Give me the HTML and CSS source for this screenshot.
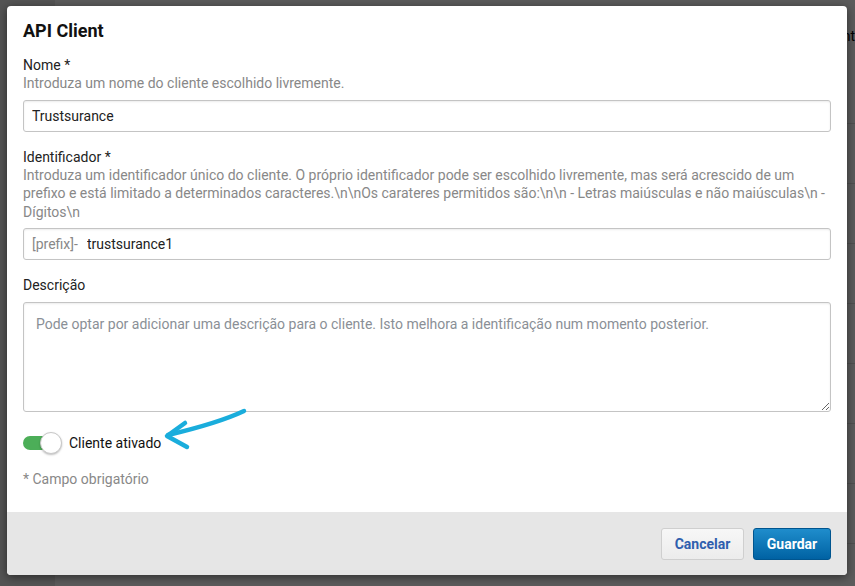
FILE: index.html
```html
<!DOCTYPE html>
<html lang="pt">
<head>
<meta charset="utf-8">
<title>API Client</title>
<link rel="stylesheet" href="styles.css">
</head>
<body>
<div class="page">
  <aside class="sidebar"></aside>
  <main class="main">
    <div class="bg-title"><span class="bg-title-text">Client</span></div>
    <div class="bg-rows">
      <div class="bg-row"></div><div class="bg-row"></div><div class="bg-row"></div><div class="bg-row"></div>
      <div class="bg-row"></div><div class="bg-row"></div><div class="bg-row"></div><div class="bg-row"></div>
    </div>
  </main>
</div>
<div class="backdrop"></div>
<div class="modal">
  <div class="modal-body">
    <h1 class="modal-title">API Client</h1>
    <div class="field">
      <label class="label">Nome *</label>
      <div class="help">Introduza um nome do cliente escolhido livremente.</div>
      <input class="input" type="text" value="Trustsurance">
    </div>
    <div class="field">
      <label class="label">Identificador *</label>
      <div class="help">Introduza um identificador único do cliente. O próprio identificador pode ser escolhido livremente, mas será acrescido de um prefixo e está limitado a determinados caracteres.\n\nOs carateres permitidos são:\n\n - Letras maiúsculas e não maiúsculas\n - Dígitos\n</div>
      <div class="input prefix-input">
        <span class="prefix">[prefix]-</span>
        <input class="bare" type="text" value="trustsurance1">
      </div>
    </div>
    <div class="field">
      <label class="label">Descrição</label>
      <textarea class="textarea" placeholder="Pode optar por adicionar uma descrição para o cliente. Isto melhora a identificação num momento posterior."></textarea>
    </div>
    <div class="toggle-row">
      <span class="toggle"><span class="track"></span><span class="knob"></span></span>
      <span class="toggle-label">Cliente ativado</span>
      <svg class="arrow" width="90" height="45" viewBox="0 0 90 45">
        <path d="M83 5 C 64 14, 45 20, 7 29" fill="none" stroke="#1aaddc" stroke-width="4.5" stroke-linecap="round"/>
        <path d="M24 17 L 6 30 L 26 41" fill="none" stroke="#1aaddc" stroke-width="4.5" stroke-linecap="round" stroke-linejoin="round"/>
      </svg>
    </div>
    <div class="required">* Campo obrigatório</div>
  </div>
  <div class="modal-footer">
    <button class="btn btn-default">Cancelar</button>
    <button class="btn btn-primary">Guardar</button>
  </div>
</div>
</body>
</html>
```
FILE: styles.css
```css
* { box-sizing: border-box; }
html, body { margin: 0; padding: 0; }
body {
  width: 855px;
  height: 586px;
  overflow: hidden;
  font-family: Roboto, "Liberation Sans", Arial, sans-serif;
  font-size: 14px;
  color: #222;
  background: #fff;
}
.page {
  display: grid;
  grid-template-columns: 55px 1fr;
  height: 586px;
}
.sidebar { background: #e8e8e8; }
.main {
  background: #fff;
  padding-top: 28px;
}
.bg-title {
  display: flex;
  justify-content: flex-end;
  height: 95px;
  overflow: hidden;
}
.bg-title-text {
  width: 8px;
  overflow: hidden;
  white-space: nowrap;
  direction: rtl;
  font-size: 14px;
  line-height: 16px;
  color: #000;
}
.bg-rows { display: flex; flex-direction: column; }
.bg-row {
  height: 60px;
  border-top: 1px solid #ddd;
}
.backdrop {
  position: absolute;
  inset: 0;
  background: rgba(0, 0, 0, 0.64);
}
.modal {
  position: absolute;
  left: 7px;
  top: 6px;
  width: 840px;
  height: 569px;
  background: #fff;
  border-radius: 4px;
  box-shadow: 0 2px 10px rgba(0, 0, 0, 0.5);
  display: flex;
  flex-direction: column;
  overflow: hidden;
}
.modal-body {
  flex: 1;
  padding: 14px 16px 0 16px;
}
.modal-title {
  margin: 0;
  font-size: 18px;
  line-height: 22px;
  font-weight: 700;
  color: #111;
}
.field {
  display: flex;
  flex-direction: column;
  margin-top: 14px;
}
.field + .field { margin-top: 16px; }
.label {
  font-size: 14px;
  line-height: 18px;
  color: #222;
}
.help {
  font-size: 14px;
  line-height: 18.5px;
  color: #888;
}
.input {
  margin-top: 7px;
  height: 32px;
  border: 1px solid #c4c4c4;
  border-radius: 3px;
  box-shadow: inset 0 1px 2px rgba(0, 0, 0, 0.08);
  padding: 0 8px;
  font-family: inherit;
  font-size: 14px;
  color: #222;
  background: #fff;
  outline: none;
}
.prefix-input {
  display: flex;
  align-items: center;
  gap: 9px;
}
.prefix { color: #888; }
.bare {
  flex: 1;
  border: 0;
  outline: none;
  padding: 0;
  font-family: inherit;
  font-size: 14px;
  color: #222;
  background: transparent;
}
.textarea {
  margin-top: 8px;
  height: 110px;
  border: 1px solid #c4c4c4;
  border-radius: 3px;
  box-shadow: inset 0 1px 2px rgba(0, 0, 0, 0.08);
  padding: 12px 12px;
  font-family: inherit;
  font-size: 14px;
  line-height: 18px;
  color: #222;
  resize: vertical;
  outline: none;
}
.textarea::placeholder { color: #8a8f96; }
.toggle-row {
  position: relative;
  display: flex;
  align-items: center;
  gap: 7px;
  margin-top: 20px;
  height: 22px;
}
.toggle {
  position: relative;
  width: 39px;
  height: 22px;
  display: inline-block;
}
.track {
  position: absolute;
  left: 0;
  top: 4px;
  width: 34px;
  height: 14px;
  border-radius: 7px;
  background: #4cae58;
}
.knob {
  position: absolute;
  left: 17px;
  top: 0;
  width: 22px;
  height: 22px;
  border-radius: 50%;
  background: #fff;
  border: 1px solid #c8c8c8;
  box-shadow: 0 1px 2px rgba(0, 0, 0, 0.25);
}
.toggle-label {
  font-size: 14px;
  color: #111;
}
.arrow {
  position: absolute;
  left: 138px;
  top: -26px;
}
.required {
  margin-top: 16px;
  font-size: 14px;
  line-height: 18px;
  color: #888;
}
.modal-footer {
  height: 63px;
  background: #e6e6e6;
  display: flex;
  justify-content: flex-end;
  align-items: flex-start;
  gap: 9px;
  padding: 16px 16px 0 0;
}
.btn {
  height: 32px;
  border-radius: 3px;
  font-family: inherit;
  font-size: 14px;
  font-weight: 700;
  cursor: pointer;
}
.btn-default {
  width: 83px;
  background: linear-gradient(#f7f7f7, #ececec);
  border: 1px solid #cfcfcf;
  color: #2f5fae;
}
.btn-primary {
  width: 78px;
  background: linear-gradient(#1f8dcc, #0062a3);
  border: 1px solid #00558f;
  color: #fff;
}
```
